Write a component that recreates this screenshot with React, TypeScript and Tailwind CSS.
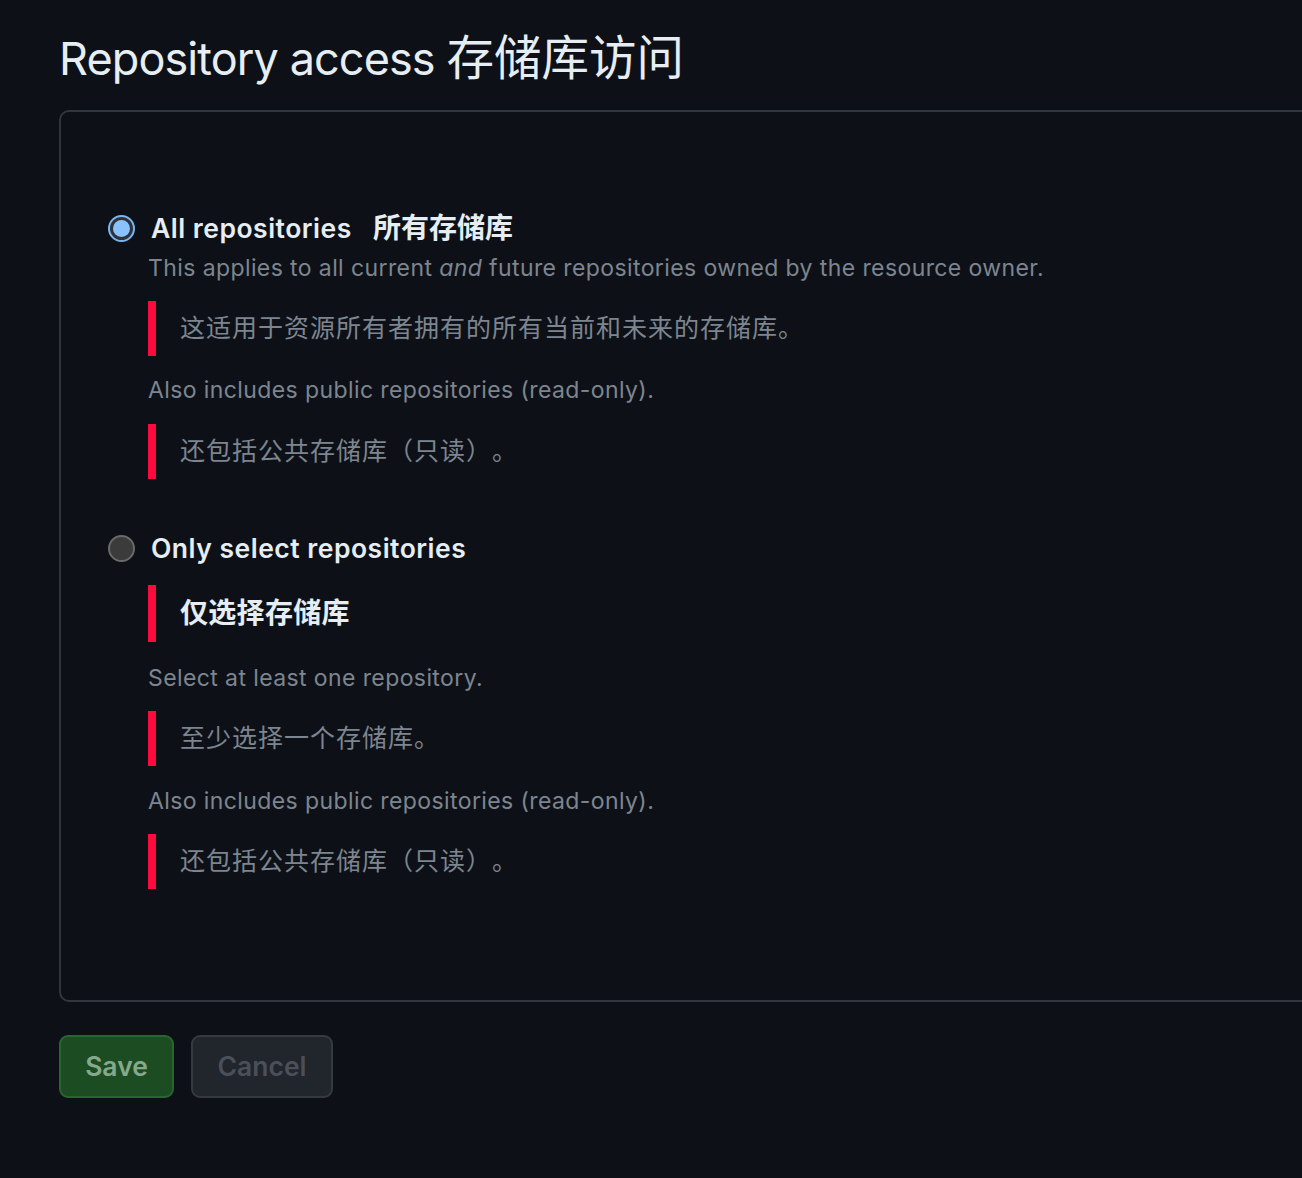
import type { ReactNode } from "react";

const font = { fontFamily: 'Inter, "Noto Sans CJK SC", "Noto Sans", sans-serif' };

function Radio({ checked }: { checked?: boolean }) {
  if (checked) {
    return (
      <span className="flex h-[27px] w-[27px] shrink-0 items-center justify-center rounded-full border-2 border-[#79b4f3] bg-[#303237]">
        <span className="h-[17px] w-[17px] rounded-full bg-[#8ac2ff]" />
      </span>
    );
  }
  return <span className="h-[27px] w-[27px] shrink-0 rounded-full border-2 border-[#6a6a6a] bg-[#3b3b3b]" />;
}

function Quote({ children, strong, className = "" }: { children: ReactNode; strong?: boolean; className?: string }) {
  return (
    <div className={`border-l-[8px] border-[#ff0a3c] py-[9px] pl-[24px] ${className}`}>
      {strong ? (
        <p className="text-[28px] font-bold leading-[39px] tracking-[0.3px] text-[#e6edf3]">{children}</p>
      ) : (
        <p className="text-[25px] leading-[37px] tracking-[1px] text-[#7d8590] [text-spacing-trim:space-all]">
          {children}
        </p>
      )}
    </div>
  );
}

function Note({ children, className = "" }: { children: ReactNode; className?: string }) {
  return <p className={`text-[23px] leading-[34px] tracking-[0.4px] text-[#7d8590] ${className}`}>{children}</p>;
}

export default function App() {
  return (
    <div className="min-h-screen w-full overflow-hidden bg-[#0d1117] pl-[59px] pt-[30px]" style={font}>
      <h1 className="h-[56px] text-[45px] font-normal leading-[56px] tracking-[-0.9px] text-[#e6edf3]">
        Repository access <span className="text-[47.5px] tracking-[0px]">存储库访问</span>
      </h1>

      <div className="mt-[24px] w-[1300px] rounded-[10px] border-2 border-[#30363d] pb-[111px] pl-[47px] pt-[96px]">
        <div className="flex h-[40px] items-center gap-[16px]">
          <Radio checked />
          <span className="text-[26.5px] font-semibold leading-[40px] tracking-[0.5px] text-[#e6edf3]">
            All repositories <span className="ml-[14px] text-[28px] tracking-[0px]">所有存储库</span>
          </span>
        </div>
        <div className="pl-[40px]">
          <Note className="mt-[3px]">
            This applies to all current <em>and</em> future repositories owned by the resource owner.
          </Note>
          <Quote className="mt-[16px]">这适用于资源所有者拥有的所有当前和未来的存储库。</Quote>
          <Note className="mt-[17px]">Also includes public repositories (read-only).</Note>
          <Quote className="mt-[17px]">还包括公共存储库（只读）。</Quote>
        </div>

        <div className="mt-[49px] flex h-[40px] items-center gap-[16px]">
          <Radio />
          <span className="text-[26.5px] font-semibold leading-[40px] tracking-[0.5px] text-[#e6edf3]">
            Only select repositories
          </span>
        </div>
        <div className="pl-[40px]">
          <Quote strong className="mt-[17px]">仅选择存储库</Quote>
          <Note className="mt-[19px]">Select at least one repository.</Note>
          <Quote className="mt-[16px]">至少选择一个存储库。</Quote>
          <Note className="mt-[18px]">Also includes public repositories (read-only).</Note>
          <Quote className="mt-[16px]">还包括公共存储库（只读）。</Quote>
        </div>
      </div>

      <div className="mt-[33px] flex gap-[17px]">
        <button
          type="button"
          className="h-[63px] w-[115px] rounded-[9px] border-2 border-[#2a6531] bg-[#1b4c22] text-[26.5px] font-semibold text-[#87a98b]"
        >
          Save
        </button>
        <button
          type="button"
          className="h-[63px] w-[142px] rounded-[9px] border-2 border-[#353a41] bg-[#21252c] text-[26.5px] font-semibold text-[#4a5058]"
        >
          Cancel
        </button>
      </div>
    </div>
  );
}
